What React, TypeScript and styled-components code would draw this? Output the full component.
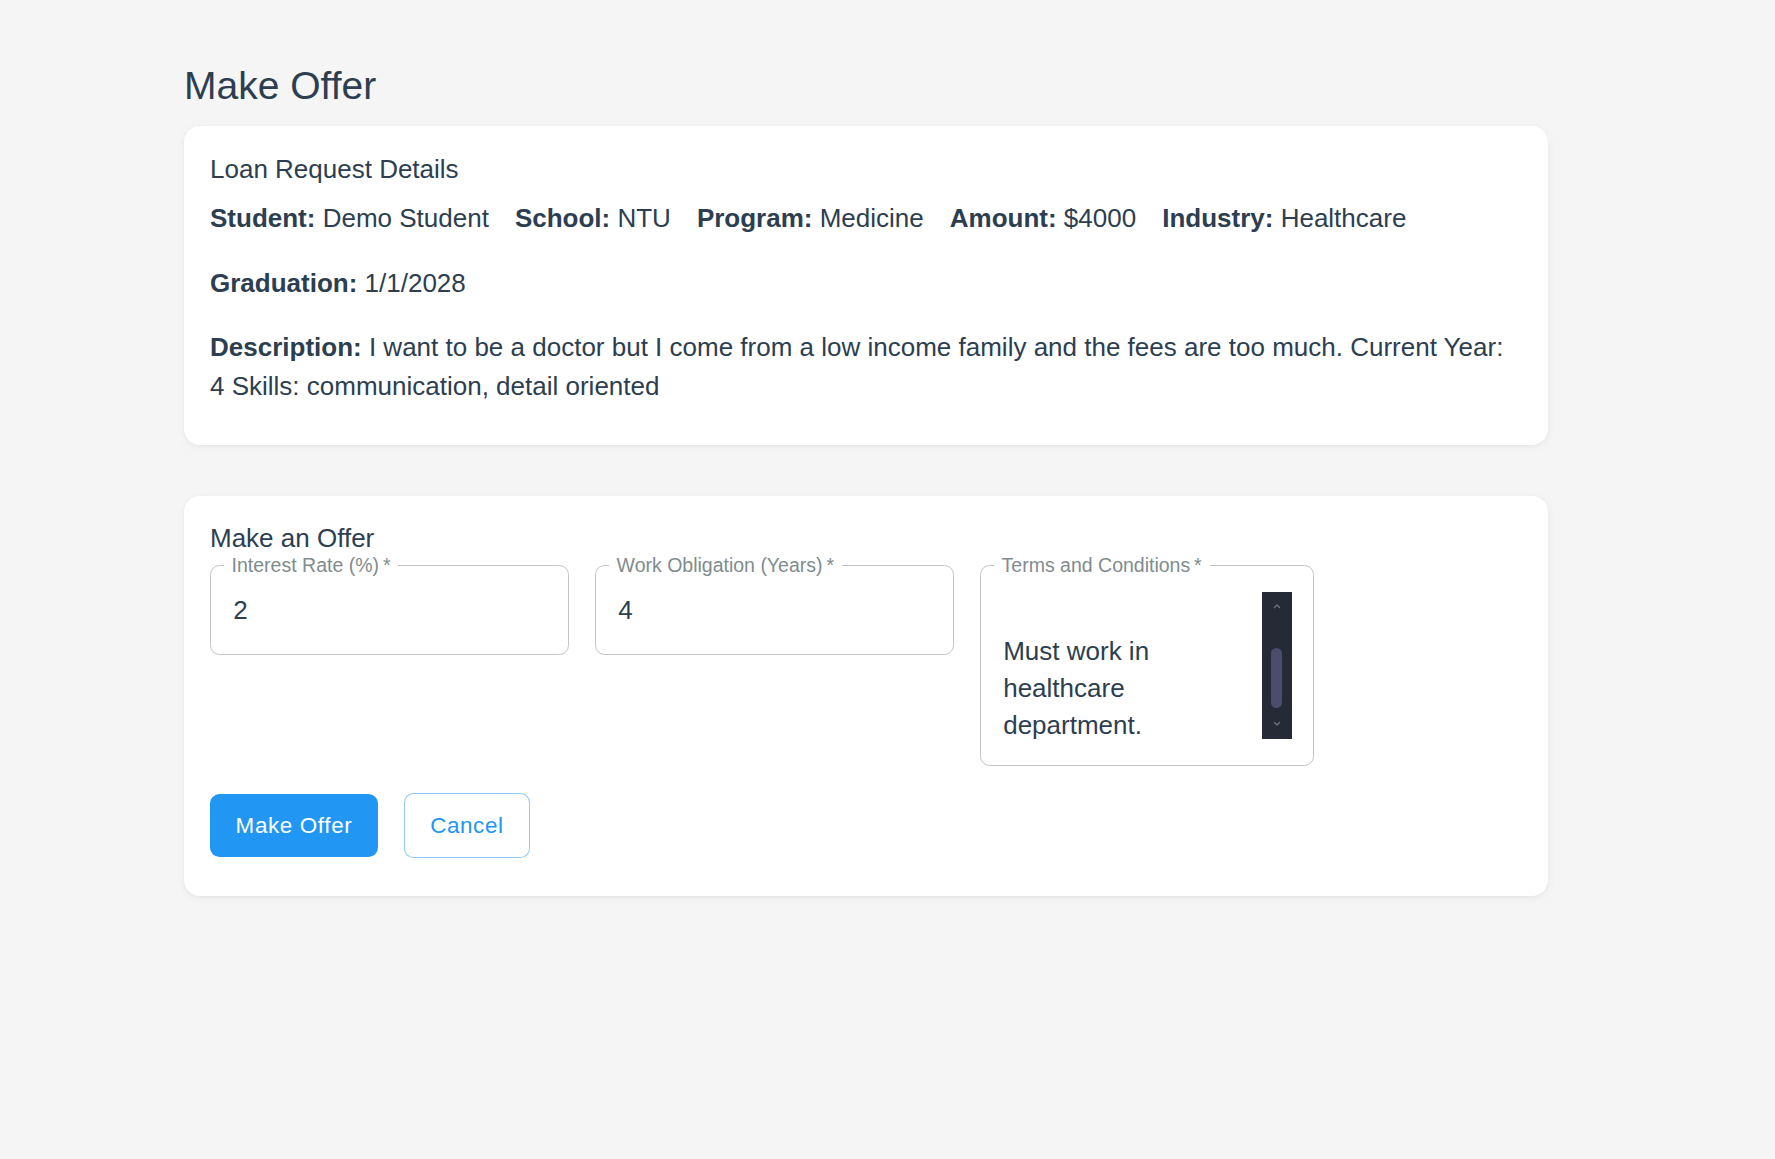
import React from "react";
import styled, { createGlobalStyle, css } from "styled-components";

const GlobalStyle = createGlobalStyle`
  html, body {
    margin: 0;
    padding: 0;
    background: #f5f5f5;
  }
  body {
    font-family: "Liberation Sans", Arial, Helvetica, sans-serif;
    color: #2c3e50;
  }
  *, *::before, *::after {
    box-sizing: border-box;
  }
`;

const Page = styled.main`
  min-height: 1159px;
  padding: 60px 0 40px 184px;
`;

const Content = styled.div`
  width: 1364px;
  display: flex;
  flex-direction: column;
`;

const Title = styled.h1`
  margin: 0 0 14.4px;
  font-size: 39px;
  line-height: 51.6px;
  font-weight: 400;
  color: #2c3e50;
`;

const Card = styled.section`
  background: #ffffff;
  border-radius: 16px;
  box-shadow: 0 2px 10px rgba(0, 0, 0, 0.05), 0 1px 3px rgba(0, 0, 0, 0.03);
  padding: 25.6px 26px 38.4px;

  & + & {
    margin-top: 51px;
  }
`;

const SectionHeading = styled.h2<{ $gap: number }>`
  margin: 0 0 ${(p) => p.$gap}px;
  font-size: 26px;
  line-height: 34.8px;
  font-weight: 400;
  color: #2c3e50;
`;

const DetailList = styled.div`
  display: flex;
  flex-wrap: wrap;
  column-gap: 26px;
  row-gap: 25.7px;
  font-size: 26px;
  line-height: 39px;
`;

const Detail = styled.div<{ $full?: boolean }>`
  ${(p) =>
    p.$full &&
    css`
      flex: 1 1 100%;
    `}
`;

const DetailLabel = styled.strong`
  font-weight: 700;
`;

const FieldsRow = styled.div`
  display: flex;
  align-items: flex-start;
  gap: 26px;
`;

const Field = styled.fieldset<{ $width: number }>`
  width: ${(p) => p.$width}px;
  min-width: 0;
  margin: 0;
  padding: 16.8px 11.8px 25.4px 12.6px;
  border: 1px solid #c4c4c4;
  border-radius: 9.6px;
`;

const FieldLabel = styled.legend`
  margin: 0;
  padding: 0 8px;
  font-size: 19.5px;
  line-height: 19.2px;
  color: #7f8c8d;
  white-space: nowrap;
`;

const TextInput = styled.input`
  display: block;
  width: 100%;
  height: 36.8px;
  margin: 0;
  padding: 0 9.6px;
  border: 0;
  outline: none;
  background: transparent;
  font-family: "Liberation Sans", Arial, Helvetica, sans-serif;
  font-size: 26px;
  line-height: 36.8px;
  color: #2c3e50;
`;

const AreaRow = styled.div`
  display: flex;
  align-items: flex-start;
`;

const TextArea = styled.textarea`
  flex: 1 1 auto;
  min-width: 0;
  height: 147.2px;
  margin: 0;
  padding: 4px 9.6px 0;
  border: 0;
  outline: none;
  resize: none;
  overflow: hidden;
  background: transparent;
  font-family: "Liberation Sans", Arial, Helvetica, sans-serif;
  font-size: 26px;
  line-height: 36.8px;
  color: #2c3e50;
`;

const ScrollBar = styled.div`
  flex: none;
  width: 30px;
  height: 147.2px;
  margin-right: 9.6px;
  padding-top: 10px;
  background: #262936;
  display: flex;
  flex-direction: column;
  align-items: center;
`;

const ScrollThumb = styled.div`
  width: 11.7px;
  height: 60px;
  margin: 37.7px 0 12.3px;
  border-radius: 6px;
  background: #4b4e6a;
`;

const Actions = styled.div`
  display: flex;
  align-items: center;
  gap: 25.6px;
  margin-top: 27px;
`;

const Button = styled.button<{ $variant: "contained" | "outlined" }>`
  margin: 0;
  padding: 12.1px 25.6px;
  border-radius: 9.6px;
  font-family: "Liberation Sans", Arial, Helvetica, sans-serif;
  font-size: 22.4px;
  font-weight: 400;
  letter-spacing: 0.64px;
  line-height: 39.2px;
  cursor: pointer;

  ${(p) =>
    p.$variant === "contained"
      ? css`
          border: 0;
          background: #2196f3;
          color: #ffffff;
        `
      : css`
          border: 1px solid rgba(33, 150, 243, 0.5);
          background: #ffffff;
          color: #2196f3;
        `}
`;

const Chevron = ({ dir }: { dir: "up" | "down" }) => (
  <svg width="8" height="8" viewBox="0 0 8 8" aria-hidden="true">
    <path
      d={dir === "up" ? "M1.5 5.5 L4 3 L6.5 5.5" : "M1.5 2.5 L4 5 L6.5 2.5"}
      fill="none"
      stroke="#6b6f80"
      strokeWidth="1.4"
      strokeLinecap="round"
      strokeLinejoin="round"
    />
  </svg>
);

const details: { label: string; value: string }[] = [
  { label: "Student:", value: "Demo Student" },
  { label: "School:", value: "NTU" },
  { label: "Program:", value: "Medicine" },
  { label: "Amount:", value: "$4000" },
  { label: "Industry:", value: "Healthcare" },
  { label: "Graduation:", value: "1/1/2028" },
];

export default function App() {
  return (
    <>
      <GlobalStyle />
      <Page>
        <Content>
          <Title>Make Offer</Title>

          <Card>
            <SectionHeading $gap={12.6}>Loan Request Details</SectionHeading>
            <DetailList>
              {details.map((d) => (
                <Detail key={d.label}>
                  <DetailLabel>{d.label}</DetailLabel> {d.value}
                </Detail>
              ))}
              <Detail $full>
                <DetailLabel>Description:</DetailLabel> I want to be a doctor but I come
                from a low income family and the fees are too much. Current Year: 4 Skills:
                communication, detail oriented
              </Detail>
            </DetailList>
          </Card>

          <Card>
            <SectionHeading $gap={0}>Make an Offer</SectionHeading>
            <FieldsRow>
              <Field $width={359}>
                <FieldLabel>Interest Rate (%)&thinsp;*</FieldLabel>
                <TextInput type="text" defaultValue="2" />
              </Field>
              <Field $width={359}>
                <FieldLabel>Work Obligation (Years)&thinsp;*</FieldLabel>
                <TextInput type="text" defaultValue="4" />
              </Field>
              <Field $width={334}>
                <FieldLabel>Terms and Conditions&thinsp;*</FieldLabel>
                <AreaRow>
                  <TextArea
                    rows={4}
                    defaultValue={"\nMust work in healthcare department."}
                  />
                  <ScrollBar>
                    <Chevron dir="up" />
                    <ScrollThumb />
                    <Chevron dir="down" />
                  </ScrollBar>
                </AreaRow>
              </Field>
            </FieldsRow>
            <Actions>
              <Button $variant="contained">Make Offer</Button>
              <Button $variant="outlined">Cancel</Button>
            </Actions>
          </Card>
        </Content>
      </Page>
    </>
  );
}
